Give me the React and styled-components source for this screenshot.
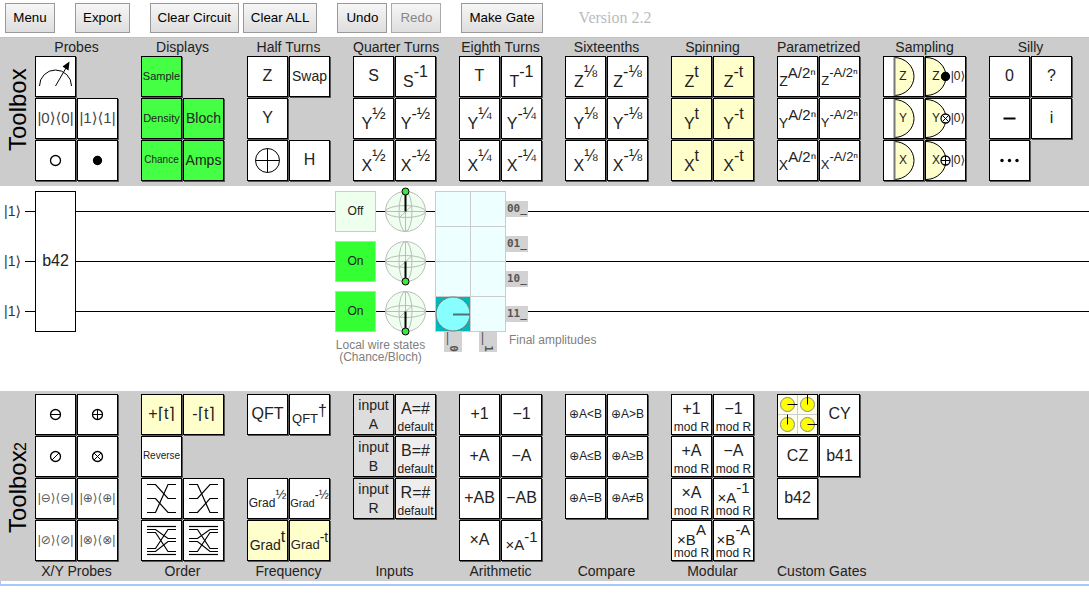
import React from 'react';
import styled, { createGlobalStyle } from 'styled-components';

const GlobalStyle = createGlobalStyle`
  * { box-sizing: border-box; }
  body {
    margin: 0;
    background: #fff;
    color: #000;
    font-family: "Liberation Sans", Arial, "DejaVu Sans", sans-serif;
  }
`;

const Page = styled.div`
  display: flex;
  flex-direction: column;
  min-width: max-content;
`;

/* ---------- top bar ---------- */

const TopBar = styled.header`
  display: flex;
  align-items: center;
  gap: 20px;
  height: 38px;
  padding: 0 5px 2px;
  border-bottom: 1px solid #aac4f5;
`;

const ButtonGroup = styled.div`
  display: flex;
  gap: 4px;
`;

const BarButton = styled.button`
  min-width: 50px;
  height: 30px;
  padding: 0 7px;
  border: 1px solid #999;
  border-radius: 0;
  background: linear-gradient(#f6f6f6, #dedede);
  color: #000;
  font-family: "Liberation Sans", Arial, sans-serif;
  white-space: nowrap;

  &:disabled {
    color: #888;
    border-color: #aaa;
  }
`;

const Version = styled.span`
  padding-left: 16px;
  color: #bbb;
  font-family: "Liberation Serif", "Times New Roman", serif;
  font-size: 16px;
`;

/* ---------- toolboxes ---------- */

const ToolboxBar = styled.section`
  display: flex;
  background: #ccc;
  padding-top: ${(p) => (p.$labelsBelow ? 3 : 0)}px;
  padding-bottom: ${(p) => (p.$labelsBelow ? 0 : 5)}px;
`;

const SideTitle = styled.h2`
  display: flex;
  align-items: center;
  justify-content: center;
  width: 35px;
  margin: 0;
  font-size: 24px;
  font-weight: 400;
  line-height: 35px;
  writing-mode: vertical-rl;
  transform: rotate(180deg);
`;

const SideIndex = styled.span`
  font-size: 16px;
  line-height: 28px;
  align-self: flex-end;
`;

const Groups = styled.div`
  display: flex;
  gap: 23px;
`;

const Group = styled.div`
  display: flex;
  flex-direction: ${(p) => (p.$labelsBelow ? 'column-reverse' : 'column')};
  justify-content: flex-end;
  width: 83px;
`;

const GroupTitle = styled.h3`
  margin: 0;
  font-size: 14px;
  font-weight: 400;
  line-height: ${(p) => (p.$labelsBelow ? 20 : 18)}px;
  text-align: center;
  white-space: nowrap;
  color: #222;
`;

const GateGrid = styled.div`
  display: grid;
  grid-template-columns: repeat(2, 41px);
  grid-template-rows: repeat(${(p) => p.$rows}, 41px);
  gap: 1px;
`;

const Gate = styled.button`
  display: flex;
  flex-direction: column;
  align-items: center;
  justify-content: center;
  padding: 0 0 ${(p) => (p.$plain ? 2 : 0)}px;
  border: 1px solid #000;
  border-radius: 0;
  box-shadow: 1px 1px 0 #555;
  background: ${(p) => p.$fill || '#fff'};
  color: ${(p) => p.$ink || '#222'};
  font-family: "Liberation Sans", Arial, "DejaVu Sans", sans-serif;
  font-size: ${(p) => p.$size || 16}px;
  line-height: 18px;
  white-space: nowrap;
`;

const Power = styled.span`
  display: flex;
  font-size: ${(p) => p.$size || 16}px;
  line-height: 18px;
`;

const PowerBase = styled.span`
  padding-top: ${(p) => p.$drop}px;
`;

const PowerSup = styled.span`
  font-size: ${(p) => p.$size || 16}px;
`;

const TopLine = styled.span`
  display: flex;
  align-items: center;
  height: ${(p) => p.$height || 25}px;
  font-size: ${(p) => p.$size || 16}px;
`;

const BottomLine = styled.span`
  font-size: ${(p) => p.$size || 12}px;
  line-height: ${(p) => p.$height || 12}px;
`;

const Drawing = styled.svg`
  display: block;
  overflow: visible;
  fill: none;
  stroke: #000;
  stroke-width: 1;

  text {
    fill: #222;
    stroke: none;
    font-size: 12px;
    text-anchor: middle;
  }
`;

const BottomEdge = styled.div`
  height: 5px;
  border-left: 1px solid #a8c7fa;
  border-bottom: 2px solid #a8c7fa;
`;

/* ---------- circuit ---------- */

const Circuit = styled.main`
  display: grid;
  min-height: 205px;

  & > * { grid-area: 1 / 1; }
`;

const Wires = styled.div`
  display: flex;
  flex-direction: column;
`;

const Wire = styled.div`
  display: flex;
  align-items: center;
  height: 50px;
  padding-left: 4px;
  font-size: 14px;
  color: #333;
`;

const WireState = styled.span`
  width: 21px;
`;

const WireLine = styled.span`
  flex: 1;
  height: 1px;
  background: #000;
`;

const Placed = styled.div`
  display: flex;
  align-items: flex-start;
  padding: 5px 0 0 35px;
`;

const TallGate = styled.div`
  display: flex;
  align-items: center;
  justify-content: center;
  width: 41px;
  height: 141px;
  margin-right: 259px;
  padding-bottom: 2px;
  border: 1px solid #000;
  background: #fff;
  color: #222;
  font-size: 16px;
`;

const States = styled.div`
  margin-right: 9px;
`;

const StateGrid = styled.div`
  display: grid;
  grid-template-columns: repeat(2, 41px);
  grid-auto-rows: 41px;
  gap: 9px;
`;

const Chance = styled.div`
  display: flex;
  align-items: center;
  justify-content: center;
  padding-bottom: 2px;
  border: 1px solid #ccc;
  background: ${(p) => (p.$on ? '#3f3' : '#efe')};
  color: #222;
  font-size: 12px;
`;

const Caption = styled.p`
  margin: 0;
  padding: ${(p) => (p.$inset ? '2px 3px 0' : '7px 0 0')};
  color: #808080;
  font-size: 12px;
  line-height: 12px;
  text-align: center;
  white-space: nowrap;
`;

const Amplitudes = styled.div`
  display: grid;
  grid-template-columns: repeat(2, 35px);
  grid-auto-rows: 35px;
  width: 71px;
  border: solid #ccc;
  border-width: 0 1px 0 0;
`;

const Amplitude = styled.div`
  border: solid #ccc;
  border-width: 1px 0 0 1px;
  background: ${(p) => (p.$full ? '#00b8b8' : '#eff')};
`;

const KetRows = styled.div`
  display: grid;
  grid-template-rows: repeat(4, 35px);
  align-items: center;
  justify-items: start;
  height: 141px;
`;

const Ket = styled.span`
  padding: 0 1px;
  background: #d2d2d2;
  color: #555;
  font-family: "DejaVu Sans Mono", monospace;
  font-size: 11px;
  font-weight: 700;
  line-height: 16px;
`;

const KetColumns = styled.div`
  display: grid;
  grid-template-columns: repeat(2, 35px);
  justify-items: center;
  border-top: 1px solid #ccc;

  ${Ket} { writing-mode: vertical-rl; }
`;

/* ---------- drawings ---------- */

const Icon = ({ children, label }) => (
  <Drawing width="39" height="39" viewBox="1 1 39 39" role="img" aria-label={label}>
    {children}
  </Drawing>
);

const Meter = () => (
  <Icon label="Measure">
    <path d="M4.500 30A16 16 0 0 1 36.500 30M20.500 30L31 12" />
    <path d="M34.500 5.500L27.500 10.500L33.500 14.500Z" fill="#000" stroke="none" />
  </Icon>
);

const Mark = ({ x = 20.5, y = 20.5, r = 5, kind }) => {
  const d = r * 0.7;
  return (
    <>
      <circle cx={x} cy={y} r={r} strokeWidth={r < 10 ? 1.3 : 1} fill={kind === 'dot' ? '#000' : 'none'} />
      {(kind === 'minus' || kind === 'plus') && <path d={`M${x - r} ${y}H${x + r}`} />}
      {kind === 'plus' && <path d={`M${x} ${y - r}V${y + r}`} />}
      {(kind === 'slash' || kind === 'cross') && <path d={`M${x - d} ${y + d}L${x + d} ${y - d}`} />}
      {kind === 'cross' && <path d={`M${x - d} ${y - d}L${x + d} ${y + d}`} />}
    </>
  );
};

const CROSSINGS = {
  cycle: [[6.5, 20.5], [20.5, 34.5], [34.5, 6.5]],
  weave: [[6.5, 6.5], [9.5, 18.5], [12.5, 31.5], [28.5, 9.5], [31.5, 21.5], [34.5, 34.5]],
};

const Crossing = ({ kind, flip, label }) => (
  <Icon label={label}>
    {CROSSINGS[kind].map(([a, b]) => {
      const [from, to] = flip ? [b, a] : [a, b];
      return <path key={a} d={`M6 ${from}H14.500L27 ${to}H35`} strokeWidth="1.200" />;
    })}
  </Icon>
);

const Detector = ({ axis, control }) => {
  const left = control ? 1 : 11;
  return (
    <Icon label={`${axis} detector`}>
      <path d={`M${left} 1.500A20 19 0 0 1 ${left} 39.500`} fill="#ffffcc" />
      {!control && <path d="M11.500 1V40" stroke="#777" strokeWidth="2" />}
      <text x={control ? 11 : 20} y="24">{axis}</text>
      {control && (
        <>
          <circle cx="20.500" cy="20.500" r="4.500" fill="#fff" stroke="none" />
          <Mark x={20.5} r={control === 'dot' ? 4 : 4.5} kind={control} />
          <text x="33" y="24">|0⟩</text>
        </>
      )}
    </Icon>
  );
};

const PhaseMatrix = () => (
  <Icon label="Custom matrix gate">
    <path d="M1 1H40V40H1Z" fill="#ffffee" stroke="none" />
    <path d="M20.500 1V40M1 20.500H40" stroke="#ccc" />
    {[[10.5, 10.5, 'h10'], [30.5, 10.5, 'v-10'], [10.5, 30.5, 'v-10'], [30.5, 30.5, 'h10']].map(([x, y, hand]) => (
      <g key={`${x}-${y}`}>
        <circle cx={x} cy={y} r="7" fill="#ff0" stroke="#888" />
        <path d={`M${x} ${y}${hand}`} />
      </g>
    ))}
  </Icon>
);

const Bloch = ({ up }) => (
  <Drawing width="41" height="41" viewBox="0 0 41 41" role="img" aria-label={up ? 'Bloch up' : 'Bloch down'}>
    <g stroke="#bbb">
      <circle cx="20.500" cy="20.500" r="20" fill="#efffef" />
      <ellipse cx="20.500" cy="20.500" rx="20" ry="6" />
      <ellipse cx="20.500" cy="20.500" rx="6.500" ry="20" />
      <path d="M0.500 20.500H40.500M20.500 0.500V40.500M15 26L26.500 15" />
    </g>
    <path d={up ? 'M20.500 20.500V0.500' : 'M20.500 20.500V40.500'} strokeWidth="2" />
    <circle cx="20.500" cy={up ? 0.5 : 40.5} r="3.500" fill="#3e3" />
  </Drawing>
);

const FullAmplitude = () => (
  <Drawing width="34" height="34" viewBox="0 0 34 34" role="img" aria-label="Amplitude 1">
    <circle cx="17" cy="17" r="17" fill="#8ff" stroke="#777" />
    <path d="M17 17.500H35" stroke="#4a7474" strokeWidth="2" />
  </Drawing>
);

/* ---------- gate contents ---------- */

const pow = (base, sup, size, supSize, below) => ({ base, sup, size, supSize, below });
const txt = (text, size, fill) => ({ text, size, fill });
const faint = (text, size, ink) => ({ text, size, ink });
const two = (text, below, extra) => ({ text, below, ...extra });
const art = (icon, fill) => ({ icon, fill });
const yellow = (gate) => ({ ...gate, fill: '#ffffcc' });
const green = (text, size) => txt(text, size, '#44ff44');

const input = (name) =>
  two('input', name, { fill: '#ddd', size: 14, belowSize: 14, topHeight: 18, belowHeight: 20 });
const preset = (name) => two(`${name}=#`, 'default', { fill: '#eee' });

const baseDrop = (gate) => (gate.size < 16 && !gate.below ? 8 : 10);

const Superscript = ({ gate }) => (
  <Power $size={gate.size}>
    <PowerBase $drop={baseDrop(gate)}>{gate.base}</PowerBase>
    <PowerSup $size={gate.supSize || gate.size}>{gate.sup}</PowerSup>
  </Power>
);

const GateButton = ({ gate }) => {
  let content = gate.icon || gate.text;
  if (gate.base) content = <Superscript gate={gate} />;
  if (gate.below) {
    content = (
      <>
        <TopLine $size={gate.size} $height={gate.topHeight}>{content}</TopLine>
        <BottomLine $size={gate.belowSize} $height={gate.belowHeight}>{gate.below}</BottomLine>
      </>
    );
  }
  return (
    <Gate
      type="button"
      $fill={gate.fill}
      $ink={gate.ink}
      $size={gate.size}
      $plain={Boolean(gate.text) && !gate.below}
    >
      {content}
    </Gate>
  );
};

const Toolbox = ({ title, index, rows, groups, labelsBelow }) => (
  <ToolboxBar $labelsBelow={labelsBelow}>
    <SideTitle>
      {title}
      {index && <SideIndex>{index}</SideIndex>}
    </SideTitle>
    <Groups>
      {groups.map((group) => (
        <Group key={group.title} $labelsBelow={labelsBelow}>
          <GroupTitle $labelsBelow={labelsBelow}>{group.title}</GroupTitle>
          <GateGrid $rows={rows}>
            {group.gates.map((gate, i) => (gate ? <GateButton key={i} gate={gate} /> : <span key={i} />))}
          </GateGrid>
        </Group>
      ))}
    </Groups>
  </ToolboxBar>
);

const TOP_GROUPS = [
  {
    title: 'Probes',
    gates: [
      art(<Meter />),
      null,
      faint('|0⟩⟨0|', 15, '#444'),
      faint('|1⟩⟨1|', 15, '#444'),
      art(<Icon label="Anti-control"><Mark /></Icon>),
      art(<Icon label="Control"><Mark kind="dot" r={4} /></Icon>),
    ],
  },
  { title: 'Displays', gates: [green('Sample', 11), null, green('Density', 11), green('Bloch', 14), green('Chance', 10), green('Amps', 14)] },
  { title: 'Half Turns', gates: [txt('Z'), txt('Swap', 14), txt('Y'), null, art(<Icon label="X"><Mark kind="plus" r={12} /></Icon>), txt('H')] },
  { title: 'Quarter Turns', gates: [txt('S'), pow('S', '-1'), pow('Y', '½'), pow('Y', '-½'), pow('X', '½'), pow('X', '-½')] },
  { title: 'Eighth Turns', gates: [txt('T'), pow('T', '-1'), pow('Y', '¼'), pow('Y', '-¼'), pow('X', '¼'), pow('X', '-¼')] },
  { title: 'Sixteenths', gates: ['Z', 'Y', 'X'].flatMap((axis) => [pow(axis, '⅛'), pow(axis, '-⅛')]) },
  { title: 'Spinning', gates: ['Z', 'Y', 'X'].flatMap((axis) => [yellow(pow(axis, 't')), yellow(pow(axis, '-t'))]) },
  { title: 'Parametrized', gates: ['Z', 'Y', 'X'].flatMap((axis) => [pow(axis, 'A/2ⁿ', 14, 15), pow(axis, '-A/2ⁿ', 13, 13)]) },
  {
    title: 'Sampling',
    gates: [['Z', 'dot'], ['Y', 'cross'], ['X', 'plus']].flatMap(([axis, control]) => [
      art(<Detector axis={axis} />),
      art(<Detector axis={axis} control={control} />),
    ]),
  },
  {
    title: 'Silly',
    gates: [
      txt('0'),
      txt('?'),
      art(<Icon label="Minus"><path d="M14.500 20.500H26.500" strokeWidth="2" /></Icon>),
      txt('i'),
      art(
        <Icon label="Spacer">
          {[13, 20.5, 28].map((x) => <circle key={x} cx={x} cy="20.500" r="1.700" fill="#000" stroke="none" />)}
        </Icon>,
      ),
    ],
  },
];

const BOTTOM_GROUPS = [
  {
    title: 'X/Y Probes',
    gates: [
      ...['minus', 'plus', 'slash', 'cross'].map((kind) => art(<Icon label={kind}><Mark kind={kind} /></Icon>)),
      ...['⊖', '⊕', '⊘', '⊗'].map((sign) => faint(`|${sign}⟩⟨${sign}|`, 12, '#555')),
    ],
  },
  {
    title: 'Order',
    gates: [
      yellow(txt('+⌈t⌉')),
      yellow(txt('-⌈t⌉')),
      txt('Reverse', 10),
      null,
      art(<Crossing kind="cycle" label="Rotate down" />),
      art(<Crossing kind="cycle" flip label="Rotate up" />),
      art(<Crossing kind="weave" label="Interleave" />),
      art(<Crossing kind="weave" flip label="Deinterleave" />),
    ],
  },
  {
    title: 'Frequency',
    gates: [
      txt('QFT'), pow('QFT', '†', 13, 16), null, null,
      pow('Grad', '½', 12, 13), pow('Grad', '-½', 11, 12),
      yellow(pow('Grad', 't', 14, 16)), yellow(pow('Grad', '-t', 13, 14)),
    ],
  },
  { title: 'Inputs', gates: ['A', 'B', 'R'].flatMap((name) => [input(name), preset(name)]) },
  { title: 'Arithmetic', gates: [txt('+1'), txt('−1'), txt('+A'), txt('−A'), txt('+AB'), txt('−AB'), txt('×A'), pow('×A', '-1', 15)] },
  { title: 'Compare', gates: ['<', '>', '≤', '≥', '=', '≠'].map((sign) => txt(`⊕A${sign}B`, 12)) },
  {
    title: 'Modular',
    gates: [
      ...['+1', '−1', '+A', '−A', '×A'].map((text) => two(text, 'mod R')),
      pow('×A', '-1', 15, 15, 'mod R'),
      pow('×B', 'A', 15, 15, 'mod R'),
      pow('×B', '-A', 15, 15, 'mod R'),
    ],
  },
  { title: 'Custom Gates', gates: [art(<PhaseMatrix />), txt('CY'), txt('CZ'), txt('b41'), txt('b42')] },
];

const WIRES = [false, true, true];

export default function App() {
  return (
    <Page>
      <GlobalStyle />
      <TopBar>
        <BarButton type="button">Menu</BarButton>
        <BarButton type="button">Export</BarButton>
        <ButtonGroup>
          <BarButton type="button">Clear Circuit</BarButton>
          <BarButton type="button">Clear ALL</BarButton>
        </ButtonGroup>
        <ButtonGroup>
          <BarButton type="button">Undo</BarButton>
          <BarButton type="button" disabled>Redo</BarButton>
        </ButtonGroup>
        <BarButton type="button">Make Gate</BarButton>
        <Version>Version 2.2</Version>
      </TopBar>

      <Toolbox title="Toolbox" rows={3} groups={TOP_GROUPS} />

      <Circuit>
        <Wires>
          {WIRES.map((_, i) => (
            <Wire key={i}>
              <WireState>|1⟩</WireState>
              <WireLine />
            </Wire>
          ))}
        </Wires>
        <Placed>
          <TallGate>b42</TallGate>
          <States>
            <StateGrid>
              {WIRES.map((on, i) => (
                <React.Fragment key={i}>
                  <Chance $on={on}>{on ? 'On' : 'Off'}</Chance>
                  <Bloch up={!on} />
                </React.Fragment>
              ))}
            </StateGrid>
            <Caption>
              Local wire states
              <br />
              (Chance/Bloch)
            </Caption>
          </States>
          <div>
            <Amplitudes>
              {[0, 1, 2, 3, 4, 5, 6, 7].map((i) => (
                <Amplitude key={i} $full={i === 6}>{i === 6 && <FullAmplitude />}</Amplitude>
              ))}
            </Amplitudes>
            <KetColumns>
              <Ket>__0</Ket>
              <Ket>__1</Ket>
            </KetColumns>
          </div>
          <div>
            <KetRows>
              {['00_', '01_', '10_', '11_'].map((ket) => <Ket key={ket}>{ket}</Ket>)}
            </KetRows>
            <Caption $inset>Final amplitudes</Caption>
          </div>
        </Placed>
      </Circuit>

      <Toolbox title="Toolbox" index="2" rows={4} groups={BOTTOM_GROUPS} labelsBelow />
      <BottomEdge />
    </Page>
  );
}
